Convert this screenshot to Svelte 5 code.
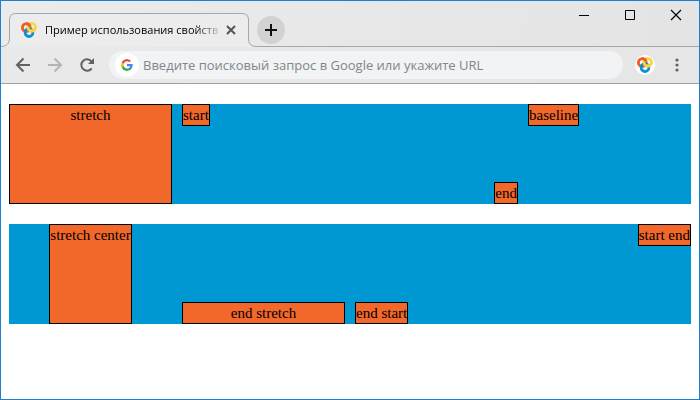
<script>
  const rows = [
    [
      { label: 'stretch', align: 'stretch', justify: 'stretch' },
      { label: 'start', align: 'start', justify: 'start' },
      { label: 'end', align: 'end', justify: 'end' },
      { label: 'baseline', align: 'baseline', justify: 'baseline' }
    ],
    [
      { label: 'stretch center', align: 'stretch', justify: 'center' },
      { label: 'end stretch', align: 'end', justify: 'stretch' },
      { label: 'end start', align: 'end', justify: 'start' },
      { label: 'start end', align: 'start', justify: 'end' }
    ]
  ];
</script>

{#snippet logo()}
  <svg class="logo" viewBox="0 0 16 16" fill="none" stroke-width="2.8" aria-hidden="true">
    <circle cx="5.3" cy="5.600" r="3.9" stroke="#f05a28" />
    <circle cx="8" cy="10.600" r="3.900" stroke="#0a93d0" />
    <path d="M7.600 5.200L11 8.600H7.200z" fill="#0a93d0" />
    <circle cx="10.7" cy="5.200" r="3.8" stroke="#fcd53a" />
    <path d="M5.3 1.700A3.900 3.900 0 0 1 8.900 4.100" stroke="#f05a28" />
  </svg>
{/snippet}

<div class="window">
  <header>
    <div class="strip">
      <div class="tab">
        <svg class="outline" viewBox="0 0 258 34" aria-hidden="true">
          <path d="M0 33.5C5 33.5 8.500 31 8.500 25V7Q8.500 .5 15 .5H241Q247.500 .5 247.500 7V26Q247.500 33.500 255 33.500H258V34H0Z" fill="#ececec" />
          <path d="M0 33.5C5 33.5 8.500 31 8.500 25V7Q8.500 .5 15 .5H241Q247.500 .5 247.500 7V26Q247.500 33.500 255 33.500H258" fill="none" stroke="#a7a7a7" />
        </svg>
        {@render logo()}
        <span class="title">Пример использования свойств</span>
        <button class="close" aria-label="Закрыть вкладку">
          <svg width="10" height="10" viewBox="0 0 10 10"><path d="M1 1l8 8M9 1L1 9" stroke="#555" stroke-width="2" /></svg>
        </button>
      </div>
      <div class="rest">
        <button class="new" aria-label="Новая вкладка">
          <svg width="12" height="12" viewBox="0 0 12 12"><path d="M6 0v12M0 6h12" stroke="#111" stroke-width="2" /></svg>
        </button>
        <div class="controls">
          <button aria-label="Свернуть"><svg width="12" height="12" viewBox="0 0 12 12"><path d="M1 6.500h10" stroke="#000" /></svg></button>
          <button aria-label="Развернуть"><svg width="12" height="12" viewBox="0 0 12 12"><path d="M1.500 1.500h9v9h-9z" fill="none" stroke="#000" /></svg></button>
          <button aria-label="Закрыть"><svg width="12" height="12" viewBox="0 0 12 12"><path d="M1 1l10 10M11 1L1 11" stroke="#000" stroke-width="1.200" /></svg></button>
        </div>
      </div>
    </div>

    <div class="toolbar">
      <button class="nav" aria-label="Назад">
        <svg width="16" height="16" viewBox="0 0 16 16" fill="none" stroke="#5f6368" stroke-width="2"><path d="M15 8H2.500M8.500 1.500L2 8l6.500 6.500" /></svg>
      </button>
      <button class="nav" aria-label="Вперёд">
        <svg width="16" height="16" viewBox="0 0 16 16" fill="none" stroke="#b4b4b4" stroke-width="2"><path d="M1 8h12.500M7.500 1.500L14 8l-6.500 6.500" /></svg>
      </button>
      <button class="nav" aria-label="Обновить">
        <svg width="16" height="16" viewBox="0 0 16 16"><path d="M12.700 11.300A5.700 5.700 0 1 1 12.400 4.300" fill="none" stroke="#5f6368" stroke-width="2" /><path d="M15 1v6H9z" fill="#5f6368" /></svg>
      </button>
      <label class="address">
        <span class="google">
          <svg width="12" height="12" viewBox="0 0 24 24" aria-hidden="true">
            <path fill="#4285f4" d="M23.500 12.300c0-.8-.1-1.600-.2-2.300H12v4.500h6.500a5.500 5.500 0 0 1-2.400 3.600v3h3.900c2.200-2.100 3.500-5.200 3.500-8.800z" />
            <path fill="#34a853" d="M12 24c3.200 0 6-1.100 8-2.900l-3.900-3c-1.100.7-2.500 1.100-4.100 1.100-3.100 0-5.800-2.100-6.700-5H1.300v3.100A12 12 0 0 0 12 24z" />
            <path fill="#fbbc05" d="M5.300 14.200a7.200 7.200 0 0 1 0-4.500V6.600h-4a12 12 0 0 0 0 10.700z" />
            <path fill="#ea4335" d="M12 4.700c1.800 0 3.300.6 4.600 1.800L20 3.100A12 12 0 0 0 1.300 6.600l4 3.100c.9-2.900 3.600-5 6.700-5z" />
          </svg>
        </span>
        <input type="text" aria-label="Адресная строка" placeholder="Введите поисковый запрос в Google или укажите URL" />
      </label>
      <button class="profile" aria-label="Профиль">{@render logo()}</button>
      <button class="menu" aria-label="Меню">
        <svg width="4" height="14" viewBox="0 0 4 14" fill="#5f6368"><circle cx="2" cy="2" r="1.600" /><circle cx="2" cy="7" r="1.600" /><circle cx="2" cy="12" r="1.600" /></svg>
      </button>
    </div>
  </header>

  <main>
    {#each rows as row}
      <div class="grid">
        {#each row as item}
          <div class="item a-{item.align} j-{item.justify}">{item.label}</div>
        {/each}
      </div>
    {/each}
  </main>
</div>

<style>
  :global(body) {
    margin: 0;
  }
  .window {
    box-sizing: border-box;
    min-height: 100vh;
    border: 1px solid #1a80d2;
    background: #fff;
    font-family: 'Open Sans', 'Noto Sans', sans-serif;
  }
  button {
    display: flex;
    align-items: center;
    justify-content: center;
    flex: none;
    padding: 0;
    border: 0;
    background: none;
  }
  svg {
    display: block;
    flex: none;
  }
  .logo {
    width: 16px;
    height: 16px;
  }
  .strip {
    display: flex;
    height: 46px;
    align-items: flex-end;
    background: linear-gradient(100deg, #ebebeb, #e4e4e4);
  }
  .tab {
    position: relative;
    box-sizing: border-box;
    display: flex;
    align-items: center;
    flex: none;
    width: 258px;
    height: 34px;
    padding: 0 20px;
  }
  .tab > :not(.outline) {
    position: relative;
  }
  .outline {
    position: absolute;
    inset: 0;
    width: 258px;
    height: 34px;
  }
  .title {
    width: 180px;
    margin-left: 8px;
    white-space: nowrap;
    font-size: 11px;
    line-height: 16px;
    color: #000;
    mask-image: linear-gradient(to right, #000 150px, transparent 178px);
  }
  .close {
    width: 16px;
    height: 16px;
    margin-left: 2px;
  }
  .rest {
    box-sizing: border-box;
    display: flex;
    flex: 1;
    justify-content: space-between;
    height: 46px;
    border-bottom: 1px solid #a7a7a7;
  }
  .new {
    width: 28px;
    height: 28px;
    margin: 15px 0 0 -2px;
    border-radius: 50%;
    background: #d2d2d2;
  }
  .controls {
    display: flex;
    height: 28px;
  }
  .controls button {
    width: 46px;
  }
  .toolbar {
    display: flex;
    align-items: center;
    height: 36px;
    padding: 0 12px 0 14px;
    border-bottom: 1px solid #a0a0a0;
    background: linear-gradient(90deg, #e9e9e9, #e6e6e6);
  }
  .nav {
    width: 16px;
    height: 16px;
    margin-right: 16px;
  }
  .address {
    display: flex;
    align-items: center;
    flex: 1;
    height: 28px;
    margin-right: 12px;
    padding: 0 4px;
    margin-left: -2px;
    border-radius: 14px;
    background: #f1f3f4;
  }
  .google {
    display: flex;
    align-items: center;
    justify-content: center;
    width: 28px;
    height: 28px;
  }
  .google svg {
    padding: 6px;
    border-radius: 50%;
    background: #fff;
  }
  input {
    flex: 1;
    min-width: 0;
    height: 24px;
    padding: 0 2px;
    border: 0;
    outline: 0;
    background: none;
    font: 13px/20px 'Open Sans', 'Noto Sans', sans-serif;
  }
  input::placeholder {
    color: #80868b;
    opacity: 1;
  }
  .profile {
    width: 20px;
    height: 20px;
    border-radius: 50%;
    background: #fff;
  }
  .menu {
    width: 20px;
    height: 20px;
    margin-left: 12px;
  }
  main {
    padding: 20px 8px 0;
  }
  .grid {
    display: grid;
    grid-template-columns: repeat(4, 1fr);
    gap: 10px;
    height: 100px;
    margin-bottom: 20px;
    background: #0098d2;
  }
  .item {
    border: 1px solid #000;
    background: #f2672a;
    color: #000;
    text-align: center;
    white-space: nowrap;
    font: 15px/20px 'Liberation Serif', serif;
  }
  .a-stretch { align-self: stretch; }
  .a-start { align-self: start; }
  .a-end { align-self: end; }
  .a-baseline { align-self: baseline; }
  .j-stretch { justify-self: stretch; }
  .j-start { justify-self: start; }
  .j-end { justify-self: end; }
  .j-center { justify-self: center; }
  .j-baseline { justify-self: baseline; }
</style>
